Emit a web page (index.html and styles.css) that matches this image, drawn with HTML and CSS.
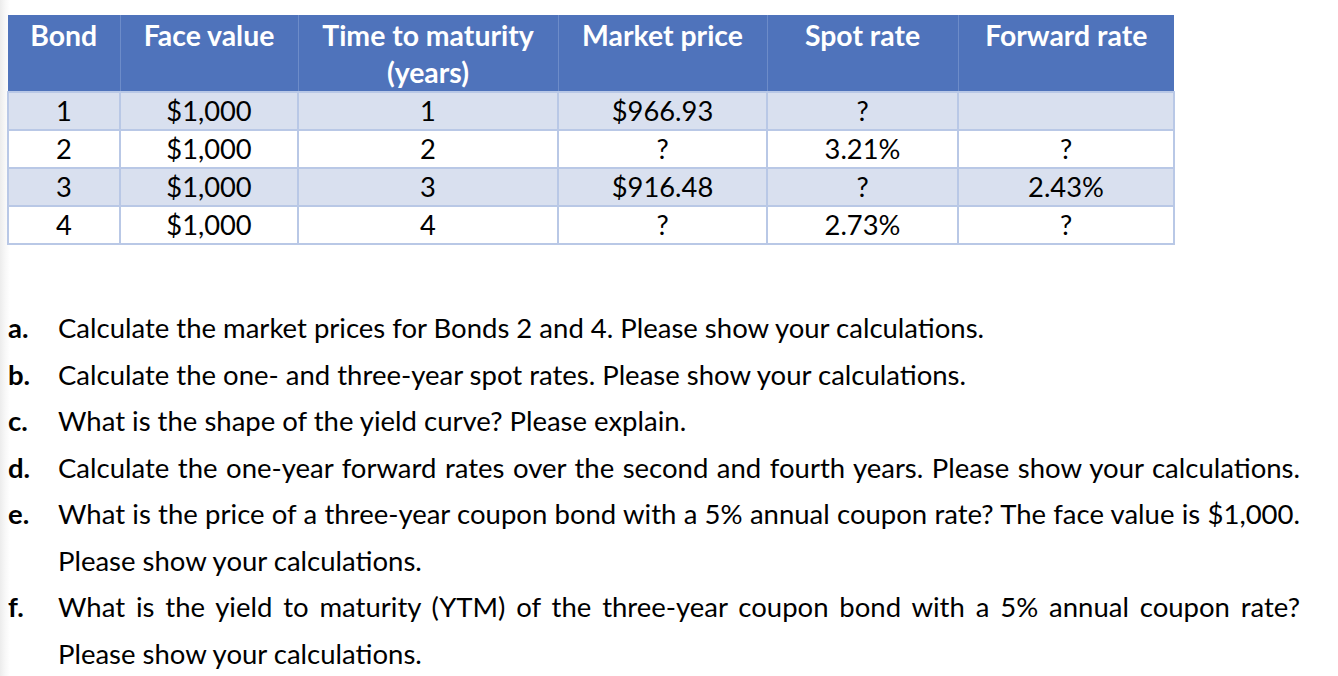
FILE: index.html
```html
<!DOCTYPE html>
<html>
<head>
<meta charset="utf-8">
<link rel="stylesheet" href="styles.css">
</head>
<body>
<div class="page">
  <table class="bonds">
    <colgroup>
      <col class="c1"><col class="c2"><col class="c3"><col class="c4"><col class="c5"><col class="c6">
    </colgroup>
    <thead>
      <tr>
        <th>Bond</th>
        <th>Face value</th>
        <th>Time to maturity<br>(years)</th>
        <th>Market price</th>
        <th>Spot rate</th>
        <th>Forward rate</th>
      </tr>
    </thead>
    <tbody>
      <tr class="band"><td>1</td><td>$1,000</td><td>1</td><td>$966.93</td><td>?</td><td></td></tr>
      <tr><td>2</td><td>$1,000</td><td>2</td><td>?</td><td>3.21%</td><td>?</td></tr>
      <tr class="band"><td>3</td><td>$1,000</td><td>3</td><td>$916.48</td><td>?</td><td>2.43%</td></tr>
      <tr><td>4</td><td>$1,000</td><td>4</td><td>?</td><td>2.73%</td><td>?</td></tr>
    </tbody>
  </table>

  <div class="questions">
    <span class="lbl">a.</span><span class="ln">Calculate the market prices for Bonds 2 and 4. Please show your calculations.</span>
    <span class="lbl">b.</span><span class="ln">Calculate the one- and three-year spot rates. Please show your calculations.</span>
    <span class="lbl">c.</span><span class="ln">What is the shape of the yield curve? Please explain.</span>
    <span class="lbl">d.</span><span class="ln full">Calculate the one-year forward rates over the second and fourth years. Please show your calculations.</span>
    <span class="lbl">e.</span><span class="ln full">What is the price of a three-year coupon bond with a 5% annual coupon rate? The face value is $1,000.</span>
    <span class="lbl"></span><span class="ln">Please show your calculations.</span>
    <span class="lbl">f.</span><span class="ln full">What is the yield to maturity (YTM) of the three-year coupon bond with a 5% annual coupon rate?</span>
    <span class="lbl"></span><span class="ln">Please show your calculations.</span>
  </div>
</div>
</body>
</html>
```
FILE: styles.css
```css
html, body {
  margin: 0;
  padding: 0;
}
body {
  background: linear-gradient(to right, #ececec 0, #f7f7f7 5px, #ffffff 10px);
  font-family: Lato, "Open Sans", sans-serif;
  color: #000;
  width: 1338px;
  height: 676px;
  overflow: hidden;
}
.page {
  padding: 15px 0 0 7px;
}
.bonds {
  border-collapse: collapse;
  table-layout: fixed;
  width: 1166px;
  font-size: 27.3px;
}
.c1 { width: 112px; }
.c2 { width: 178px; }
.c3 { width: 260px; }
.c4 { width: 209px; }
.c5 { width: 191px; }
.c6 { width: 216px; }
.bonds th {
  background: #4f73bb;
  color: #fff;
  font-weight: 700;
  font-size: 28.4px;
  vertical-align: top;
  height: 74px;
  padding: 2px 0 0 0;
  line-height: 37px;
  border-left: 1px solid #6d8cc9;
  text-align: center;
}
.bonds th:first-child { border-left: none; }
.bonds td {
  height: 36px;
  padding: 0;
  text-align: center;
  line-height: 36px;
  border: 2px solid #b9c8e6;
  background: #fff;
}
.bonds tr.band td {
  background: #d9e0ef;
}
.questions {
  display: grid;
  grid-template-columns: 51px 1242px;
  margin-top: 60px;
  font-size: 27.5px;
  line-height: 46.5px;
}
.lbl {
  font-weight: 700;
  padding-left: 1px;
}
.ln {
  white-space: nowrap;
}
.ln.full {
  text-align: justify;
  text-align-last: justify;
}
```
